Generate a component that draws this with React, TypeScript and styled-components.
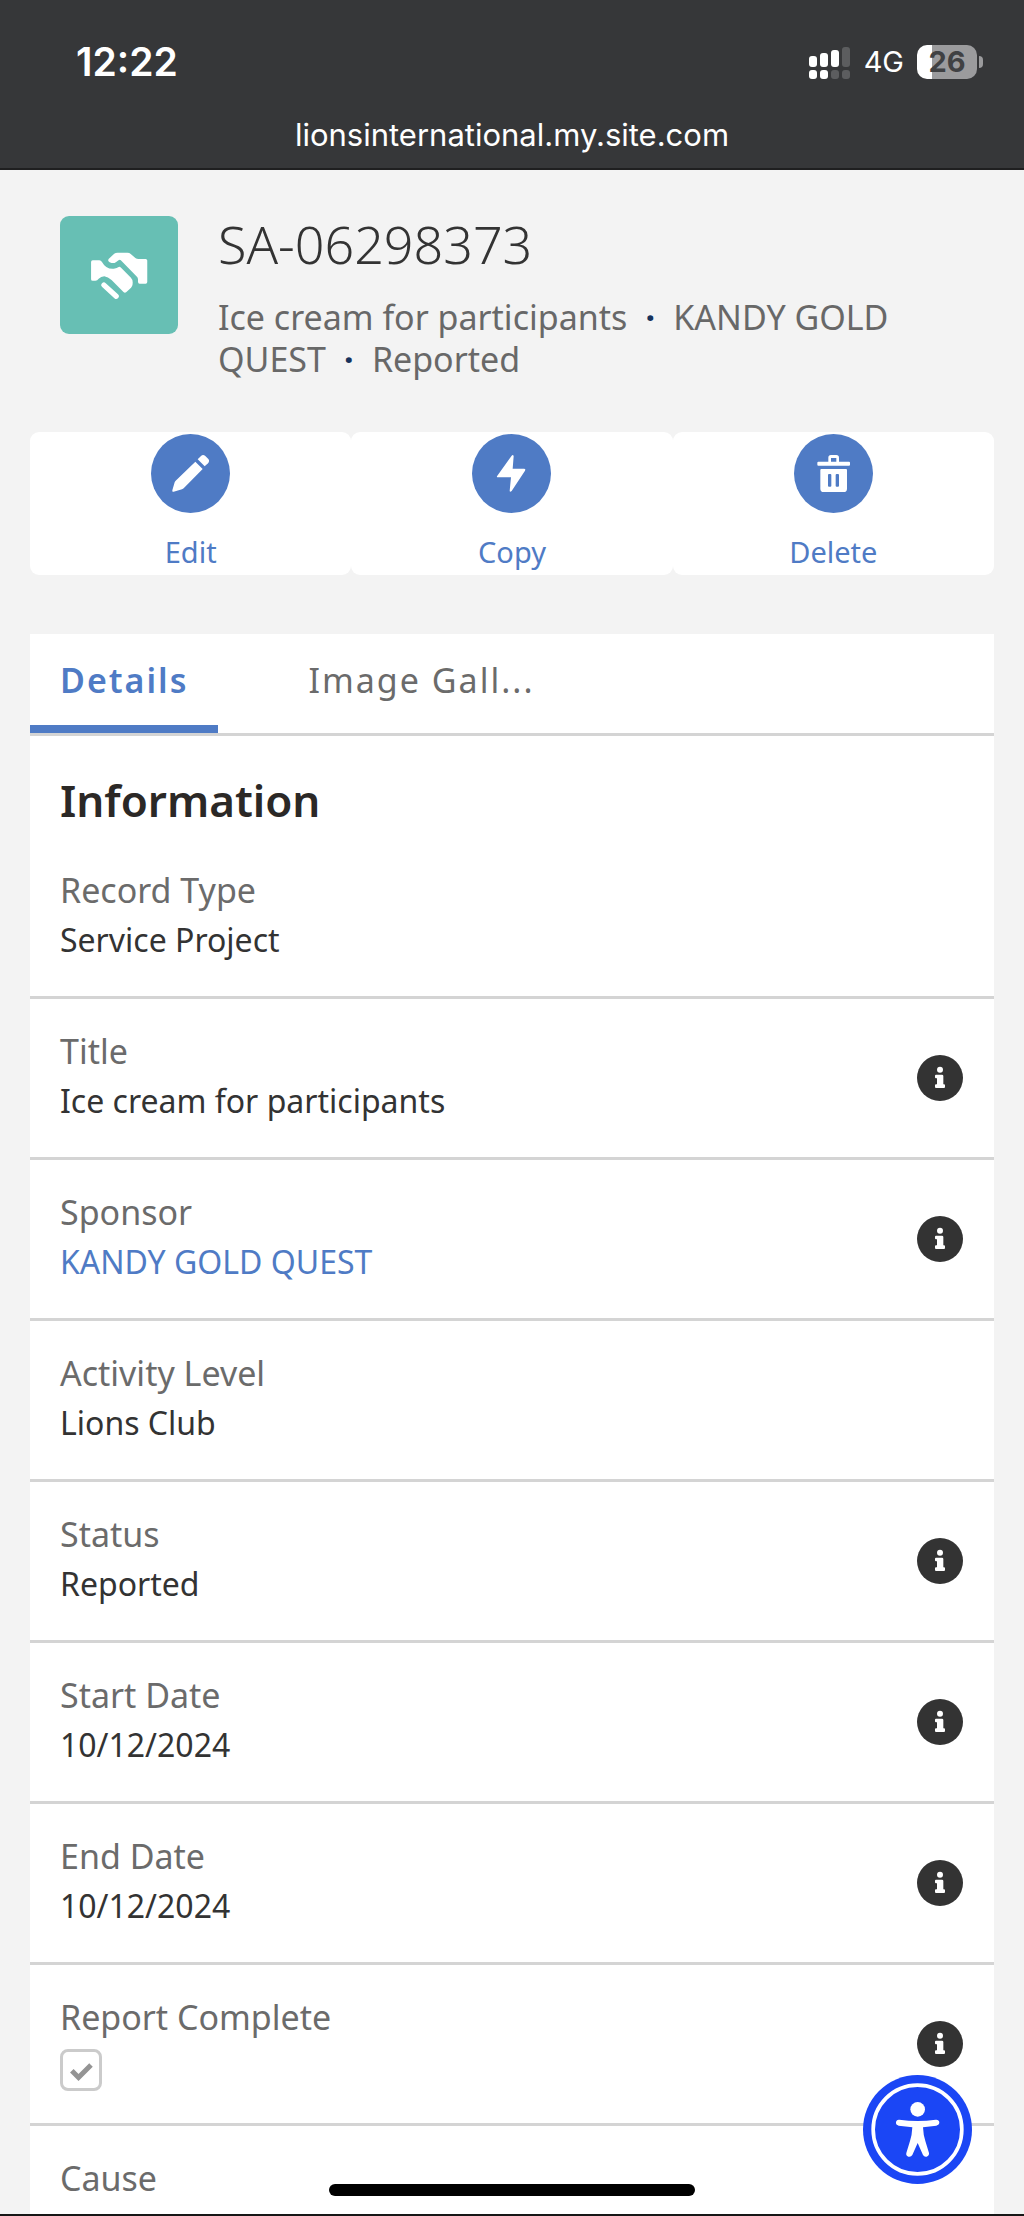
import React from "react";
import styled, { createGlobalStyle } from "styled-components";

const BLUE = "#4f7bc5";
const LINE = "#d4d4d4";

const GlobalStyle = createGlobalStyle`
  * { box-sizing: border-box; }
  body { margin: 0; background: #f3f3f3; }
  button { font: inherit; border: 0; padding: 0; background: none; cursor: pointer; }
`;

const Screen = styled.div`
  display: flex;
  flex-direction: column;
  height: 100vh;
  overflow: hidden;
  border-bottom: 2px solid #161616;
  font-family: "Noto Sans", "Open Sans", sans-serif;
  color: #333;
`;

const BrowserBar = styled.header`
  flex: none;
  background: #363739;
  border-bottom: 2px solid #1f1f20;
  color: #fff;
  font-family: Inter, sans-serif;
`;

const StatusRow = styled.div`
  display: flex;
  justify-content: space-between;
  align-items: center;
  height: 97px;
  padding: 27px 41px 0 76px;
`;

const Clock = styled.time`
  font-size: 39px;
  line-height: 48px;
  font-weight: 600;
`;

const Indicators = styled.div`
  display: flex;
  align-items: center;
  gap: 13px;
`;

const Network = styled.span`
  font-size: 29px;
  line-height: 36px;
`;

const Battery = styled.div`
  display: flex;
  align-items: center;
  gap: 2px;
`;

const BatteryBody = styled.div`
  display: flex;
  justify-content: center;
  width: 60px;
  border-radius: 10px;
  background: linear-gradient(to right, #fff 25%, #9b9b9d 25%);
  color: #404143;
  font-size: 29px;
  line-height: 34px;
  font-weight: 700;
`;

const BatteryTip = styled.div`
  width: 4px;
  height: 12px;
  border-radius: 0 6px 6px 0;
  background: #9b9b9d;
`;

const Address = styled.div`
  height: 71px;
  padding-top: 18px;
  text-align: center;
  font-size: 31px;
  line-height: 40px;
`;

const Page = styled.main`
  flex: 1;
  min-height: 0;
  overflow: auto;
  scrollbar-width: none;
  padding: 46px 30px 0;
  background: #f3f3f3;
`;

const RecordHeader = styled.section`
  display: flex;
  gap: 40px;
  padding: 0 30px;
`;

const RecordIcon = styled.div`
  flex: none;
  width: 118px;
  height: 118px;
  border-radius: 9px;
  background: #67bfb4;
  svg { display: block; }
`;

const RecordName = styled.h1`
  margin: 0;
  font-size: 52px;
  line-height: 56px;
  font-weight: 300;
`;

const RecordSummary = styled.p`
  margin: 24px 0 0;
  font-size: 34px;
  line-height: 42px;
  color: #686868;
`;

const Dot = styled.span`
  display: inline-block;
  width: 46px;
  text-align: center;
  color: #16325c;
  font-weight: 700;
`;

const Actions = styled.nav`
  display: grid;
  grid-template-columns: repeat(3, 1fr);
  margin-top: 52px;
`;

const ActionButton = styled.button`
  display: flex;
  flex-direction: column;
  align-items: center;
  gap: 18px;
  height: 143px;
  padding-top: 2px;
  border-radius: 9px;
  background: #fff;
  color: ${BLUE};
  font-size: 29px;
  line-height: 42px;
  svg { display: block; flex: none; }
`;

const Panel = styled.section`
  margin-top: 59px;
  background: #fff;
`;

const Tabs = styled.div`
  display: flex;
  gap: 60px;
  height: 102px;
  border-bottom: 3px solid ${LINE};
`;

const Tab = styled.button<{ $active?: boolean }>`
  padding: 0 30px;
  border-bottom: 8px solid ${(p) => (p.$active ? BLUE : "transparent")};
  color: ${(p) => (p.$active ? BLUE : "#6b6b6b")};
  font-size: 34px;
  line-height: 42px;
  font-weight: ${(p) => (p.$active ? 600 : 400)};
  letter-spacing: 2px;
`;

const SectionTitle = styled.h2`
  margin: 0;
  padding: 34px 30px 22px;
  font-size: 44px;
  line-height: 60px;
  font-weight: 600;
  color: #2b2826;
`;

const Row = styled.div`
  display: flex;
  justify-content: space-between;
  align-items: center;
  height: 161px;
  padding: 0 31px 0 30px;
  border-bottom: 3px solid ${LINE};
`;

const FirstRow = styled(Row)`
  height: 147px;
  padding-bottom: 14px;
`;

const Field = styled.div`
  display: flex;
  flex-direction: column;
  align-items: flex-start;
  padding-bottom: 4px;
`;

const Label = styled.label`
  font-size: 34px;
  line-height: 50px;
  color: #6b6b6b;
`;

const Value = styled.output`
  font-size: 32px;
  line-height: 50px;
  color: #333;
`;

const ValueLink = styled.a`
  font-size: 32px;
  line-height: 50px;
  color: ${BLUE};
  text-decoration: none;
`;

const TickBox = styled.input`
  appearance: none;
  width: 42px;
  height: 42px;
  margin: 7px 0 1px;
  border: 3px solid #cbcbcb;
  border-radius: 8px;
  background: #fff
    url("data:image/svg+xml,%3Csvg xmlns='http://www.w3.org/2000/svg' viewBox='0 0 36 36'%3E%3Cpath d='M7 19l8 8L30 12' fill='none' stroke='%23949494' stroke-width='6'/%3E%3C/svg%3E")
    center / 30px no-repeat;
`;

const InfoButton = styled.button`
  display: flex;
  svg { display: block; }
`;

const AccessibilityButton = styled.button`
  position: fixed;
  right: 52px;
  bottom: 32px;
  border-radius: 50%;
  svg { display: block; }
`;

const HomeIndicator = styled.div`
  position: fixed;
  left: 50%;
  bottom: 20px;
  width: 366px;
  height: 12px;
  margin-left: -183px;
  border-radius: 6px;
  background: #000;
`;

const SignalIcon = () => (
  <svg width="42" height="34" viewBox="0 0 42 34" fill="#fff" aria-hidden="true">
    <rect x="0" y="11" width="8" height="11" rx="3" />
    <rect x="11" y="8" width="8" height="14" rx="3" />
    <rect x="22" y="5" width="8" height="17" rx="3" />
    <rect x="33" y="2" width="8" height="20" rx="3" fill="#5c5d5f" />
    <rect x="0" y="25" width="8" height="9" rx="3" />
    <rect x="11" y="25" width="8" height="9" rx="3" />
    <rect x="22" y="25" width="8" height="9" rx="3" fill="#5c5d5f" />
    <rect x="33" y="25" width="8" height="9" rx="3" fill="#5c5d5f" />
  </svg>
);

const HandshakeIcon = () => (
  <svg width="118" height="118" viewBox="0 0 357 357" fill="#fff" aria-hidden="true">
    <path d="M147 130L164 114Q168 111 174 111H204Q210 111 214 115L228 127Q232 130 238 130H259Q264 130 264 135V200Q264 205 259 205H241Q236 205 236 199V191Q236 187 232 183L184 134Q181 131 177 134L170 139Q163 144 156 142Q142 138 147 130Z" />
    <path d="M99 134H119Q124 134 127 139Q140 163 166 159Q172 158 176 155Q180 152 184 156L214 186Q220 192 220 201Q220 214 211 221L200 231Q196 234 192 230L156 194Q145 183 134 182Q124 182 117 190Q113 196 107 196H99Q94 196 94 191V139Q94 134 99 134Z" />
    <path d="M133 209L170 243" stroke="#fff" strokeWidth="16" strokeLinecap="round" />
  </svg>
);

const ActionIcon = ({ children }: { children: React.ReactNode }) => (
  <svg width="79" height="79" viewBox="0 0 237 237" fill="#fff" aria-hidden="true">
    <circle cx="118.5" cy="118.5" r="118.5" fill={BLUE} />
    {children}
  </svg>
);

const PencilIcon = () => (
  <ActionIcon>
    <path d="M133 83L155 105L98 163Q96 165 93 166L68 173Q63 175 64 169L71 145Q72 142 74 140Z" />
    <path d="M140 76L150 66Q156 60 163 66L172 75Q177 81 171 88L161 97Z" />
  </ActionIcon>
);

const LightningIcon = () => (
  <ActionIcon>
    <path d="M119 65Q123 61 125 66L122 104H156Q162 104 159 110L119 171Q114 176 113 171L117 130H79Q72 130 76 125Z" />
  </ActionIcon>
);

const TrashIcon = () => (
  <ActionIcon>
    <path d="M73 83H103V71Q103 63 111 63H127Q135 63 135 71V83H165Q168 83 168 86V92Q168 95 165 95H73Q70 95 70 92V86Q70 83 73 83ZM111 83H127V72H111Z" fillRule="evenodd" />
    <path d="M82 105H156Q159 105 159 108V164Q159 174 149 174H89Q79 174 79 164V108Q79 105 82 105ZM102 123V155Q102 158 105 158H109Q112 158 112 155V123Q112 120 109 120H105Q102 120 102 123ZM125 123V155Q125 158 128 158H132Q135 158 135 155V123Q135 120 132 120H128Q125 120 125 123Z" fillRule="evenodd" />
  </ActionIcon>
);

const InfoIcon = () => (
  <svg width="46" height="46" viewBox="0 0 138 138" fill="#fff" aria-hidden="true">
    <circle cx="69" cy="69" r="69" fill="#333" />
    <circle cx="69" cy="44" r="9" />
    <path d="M57 59H75Q79 59 79 63V88H81Q84 88 84 91V96Q84 99 81 99H57Q54 99 54 96V91Q54 88 57 88H60V70H57Q54 70 54 67V62Q54 59 57 59Z" />
  </svg>
);

const PersonIcon = () => (
  <svg width="109" height="109" viewBox="0 0 327 327" fill="#fff" aria-hidden="true">
    <circle cx="163.5" cy="163.5" r="163.5" fill="#1b46f5" />
    <circle cx="163.5" cy="163.5" r="133" fill="none" stroke="#fff" strokeWidth="11" />
    <circle cx="164" cy="103" r="22" />
    <path d="M109 134Q164 142 218 134Q228 133 229 142Q229 150 220 152L180 157Q181 180 187 198L198 234Q199 242 191 245Q184 247 180 240L164 204L148 240Q144 247 136 245Q128 242 130 234L141 198Q147 180 148 157L107 152Q98 150 99 142Q100 133 109 134Z" />
  </svg>
);

type FieldRow = {
  id: string;
  label: string;
  value?: string;
  link?: boolean;
  ticked?: boolean;
  info?: boolean;
};

const fields: FieldRow[] = [
  { id: "title", label: "Title", value: "Ice cream for participants", info: true },
  { id: "sponsor", label: "Sponsor", value: "KANDY GOLD QUEST", link: true, info: true },
  { id: "level", label: "Activity Level", value: "Lions Club" },
  { id: "status", label: "Status", value: "Reported", info: true },
  { id: "start", label: "Start Date", value: "10/12/2024", info: true },
  { id: "end", label: "End Date", value: "10/12/2024", info: true },
  { id: "complete", label: "Report Complete", ticked: true, info: true },
  { id: "cause", label: "Cause", value: "" },
];

const FieldItem = ({ row }: { row: FieldRow }) => (
  <Row>
    <Field>
      <Label htmlFor={row.id}>{row.label}</Label>
      {row.ticked ? (
        <TickBox id={row.id} type="checkbox" checked readOnly />
      ) : row.link ? (
        <ValueLink id={row.id} href="#sponsor">{row.value}</ValueLink>
      ) : (
        <Value id={row.id}>{row.value || "\u00a0"}</Value>
      )}
    </Field>
    {row.info && (
      <InfoButton type="button" aria-label={`About ${row.label}`}>
        <InfoIcon />
      </InfoButton>
    )}
  </Row>
);

export default function App() {
  return (
    <>
      <GlobalStyle />
      <Screen>
        <BrowserBar>
          <StatusRow>
            <Clock>12:22</Clock>
            <Indicators>
              <SignalIcon />
              <Network>4G</Network>
              <Battery>
                <BatteryBody>26</BatteryBody>
                <BatteryTip />
              </Battery>
            </Indicators>
          </StatusRow>
          <Address>lionsinternational.my.site.com</Address>
        </BrowserBar>
        <Page>
          <RecordHeader>
            <RecordIcon>
              <HandshakeIcon />
            </RecordIcon>
            <div>
              <RecordName>SA-06298373</RecordName>
              <RecordSummary>
                Ice cream for participants<Dot>·</Dot>KANDY GOLD QUEST<Dot>·</Dot>Reported
              </RecordSummary>
            </div>
          </RecordHeader>
          <Actions>
            <ActionButton type="button">
              <PencilIcon />
              Edit
            </ActionButton>
            <ActionButton type="button">
              <LightningIcon />
              Copy
            </ActionButton>
            <ActionButton type="button">
              <TrashIcon />
              Delete
            </ActionButton>
          </Actions>
          <Panel>
            <Tabs role="tablist">
              <Tab type="button" role="tab" aria-selected="true" $active>Details</Tab>
              <Tab type="button" role="tab" aria-selected="false">Image Gall...</Tab>
            </Tabs>
            <SectionTitle>Information</SectionTitle>
            <FirstRow>
              <Field>
                <Label htmlFor="type">Record Type</Label>
                <Value id="type">Service Project</Value>
              </Field>
            </FirstRow>
            {fields.map((row) => (
              <FieldItem key={row.id} row={row} />
            ))}
          </Panel>
        </Page>
      </Screen>
      <AccessibilityButton type="button" aria-label="Accessibility options">
        <PersonIcon />
      </AccessibilityButton>
      <HomeIndicator />
    </>
  );
}
